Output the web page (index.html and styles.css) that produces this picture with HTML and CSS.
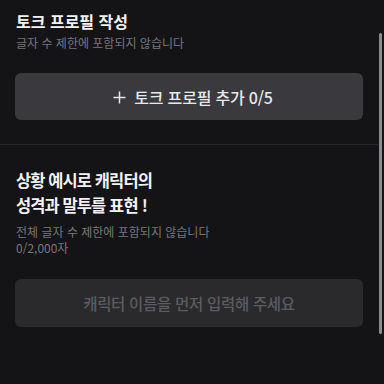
FILE: index.html
```html
<!DOCTYPE html>
<html lang="ko">
<head>
<meta charset="utf-8">
<link rel="stylesheet" href="styles.css">
</head>
<body>
<div class="page">
  <section class="section first">
    <h2 class="title">토크 프로필 작성</h2>
    <p class="sub">글자 수 제한에 포함되지 않습니다</p>
    <button class="btn add"><svg class="plus" width="13" height="13" viewBox="0 0 13 13"><path d="M6.5 0.5v12M0.5 6.5h12" stroke="#e8e8ea" stroke-width="1.5" fill="none"/></svg>토크 프로필 추가 0/5</button>
  </section>
  <hr class="divider">
  <section class="section second">
    <h2 class="title big">상황 예시로 캐릭터의<br>성격과 말투를 표현<span class="bang">!</span></h2>
    <p class="sub">전체 글자 수 제한에 포함되지 않습니다<br>0/2,000자</p>
    <button class="btn disabled">캐릭터 이름을 먼저 입력해 주세요</button>
  </section>
  <div class="scrollbar"></div>
</div>
</body>
</html>
```
FILE: styles.css
```css
* { box-sizing: border-box; }
html, body { margin: 0; padding: 0; }
body {
  background: #141416;
  font-family: "Noto Sans CJK KR", "Noto Sans", sans-serif;
  width: 384px;
  height: 384px;
  overflow: hidden;
}
.page {
  position: relative;
  height: 384px;
  padding-right: 6px;
}
.section { padding: 0 15px 0 15px; }
.first { padding-top: 9px; }
.title {
  margin: 0 0 0 1px;
  font-size: 16px;
  line-height: 24px;
  font-weight: 700;
  color: #f2f2f4;
}
.sub {
  margin: 2px 0 0 1px;
  font-size: 12px;
  line-height: 16px;
  color: #77777b;
}
.btn {
  display: flex;
  align-items: center;
  justify-content: center;
  width: 100%;
  border: none;
  border-radius: 6px;
  font-family: inherit;
  font-size: 16px;
  font-weight: 500;
  padding: 0;
}
.add {
  margin-top: 22px;
  height: 47px;
  background: #3a3a3e;
  color: #e8e8ea;
  padding-left: 8px;
  letter-spacing: -0.2px;
}
.plus {
  margin-right: 8px;
  margin-top: 1px;
}
.divider {
  margin: 24px 0 0 0;
  border: none;
  height: 1px;
  background: #27272b;
}
.second { padding-top: 23px; }
.big {
  font-size: 16.5px;
  line-height: 25px;
  letter-spacing: -0.9px;
}
.bang { margin-left: 4px; }
.second .sub { margin-top: 6px; }
.disabled {
  margin-top: 23px;
  height: 48px;
  background: #2a2a2d;
  color: #5c5c60;
  font-size: 15.5px;
  letter-spacing: -0.3px;
}
.scrollbar {
  position: absolute;
  left: 379px;
  top: 33px;
  width: 3px;
  height: 301px;
  border-radius: 2px;
  background: #8c8c90;
}
```
